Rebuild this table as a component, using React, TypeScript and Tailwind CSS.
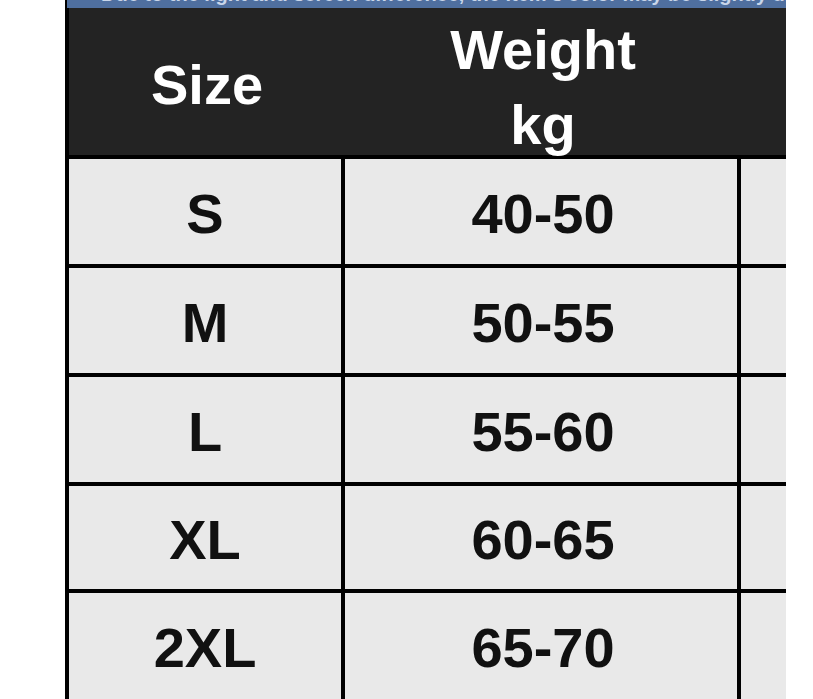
const rows = [
  { size: "S", weight: "40-50", h: "h-[109px]" },
  { size: "M", weight: "50-55", h: "h-[109px]" },
  { size: "L", weight: "55-60", h: "h-[109px]" },
  { size: "XL", weight: "60-65", h: "h-[107px]" },
  { size: "2XL", weight: "65-70", h: "h-[110px]" },
];

export default function App() {
  return (
    <div className="w-[813px] h-[699px] overflow-hidden bg-white font-['Liberation_Sans',Arial,sans-serif] font-bold">
      <div className="ml-[65px] w-[721px]">
        {/* cut-off caption strip */}
        <div className="h-[8px] overflow-hidden bg-[#4f6f9f] border-l-2 border-black">
          <p className="-mt-[16px] pl-[34px] text-[20px] leading-[20px] text-[#c9d6ea] whitespace-nowrap">
            Due to the light and screen difference, the item's color may be slightly different.
          </p>
        </div>

        {/* header */}
        <div className="flex h-[151px] bg-[#232323] border-l-4 border-b-4 border-black text-white text-[56px]">
          <div className="w-[272px] pt-[49px] text-center leading-[56px] pl-[4px]">Size</div>
          <div className="w-[400px] pt-[4px] text-center leading-[75px] pl-[4px]">
            <div>Weight</div>
            <div>kg</div>
          </div>
        </div>

        {/* body */}
        {rows.map((r) => (
          <div
            key={r.size}
            className={`flex ${r.h} bg-[#e9e9e9] border-l-4 border-b-4 border-black text-[#111] text-[56px] leading-[56px]`}
          >
            <div className="w-[276px] border-r-4 border-black flex items-center justify-center pt-[4px]">
              {r.size}
            </div>
            <div className="w-[396px] border-r-4 border-black flex items-center justify-center pt-[4px] pl-[4px]">
              {r.weight}
            </div>
            <div className="flex-1" />
          </div>
        ))}
      </div>
    </div>
  );
}
